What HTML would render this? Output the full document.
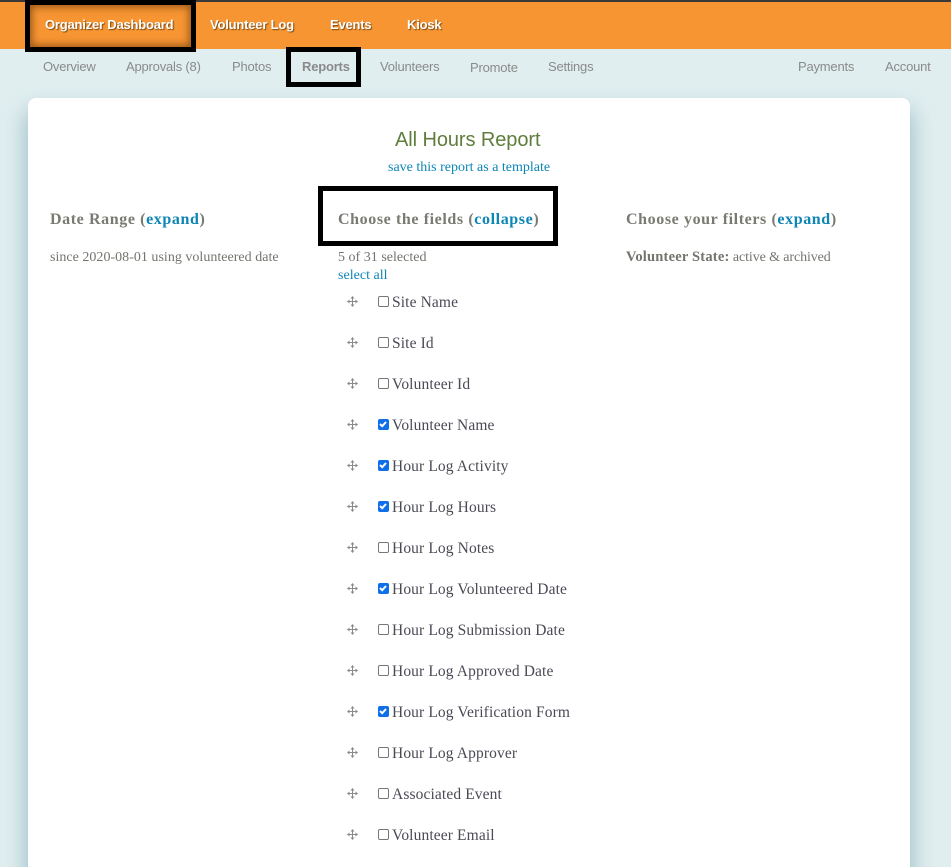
<!DOCTYPE html>
<html><head><meta charset="utf-8"><style>
html,body{margin:0;padding:0;background:#e0eeef;width:951px;height:867px;overflow:hidden}
body{position:relative}
.t{position:absolute;white-space:nowrap}
.top{position:absolute;left:0;top:0;width:951px;height:49px;background:#f79533;border-top:2px solid #3a3a3a;box-sizing:border-box}
.n{font:bold 13px "Liberation Sans",sans-serif;color:#fff;top:17px;letter-spacing:-.2px;text-shadow:1px 1px 1px #7a4a10}
.s{font:13px "Liberation Sans",sans-serif;color:#8a8a8a;top:59px;letter-spacing:-.2px}
.box{position:absolute;border:5px solid #000;box-sizing:border-box}
.card{position:absolute;left:28px;top:98px;width:882px;height:800px;background:#fff;border-radius:8px;box-shadow:0 14px 20px 3px rgba(120,165,180,.6)}
.h{font:bold 16px "Liberation Serif",serif;color:#7a7a72;letter-spacing:.6px;top:211px}
.h a,.a{color:#0e86b4}
.p{font:14px "Liberation Serif",serif;color:#74746e;letter-spacing:.02px}
.l{position:absolute;left:392px;font:15.5px "Liberation Serif",serif;color:#4a4a55;letter-spacing:.12px;white-space:nowrap}
.c{position:absolute;left:378px;width:11px;height:11px;box-sizing:border-box;border:1px solid #777;border-radius:2px;background:#fff}
.c.k{background:#0f6fe8;border-color:#0f6fe8}
.c.k svg{position:absolute;left:0;top:0}
.m{position:absolute;left:347px}
</style></head><body>
<div class="top"></div>
<div class="t n" style="left:45px">Organizer Dashboard</div>
<div class="t n" style="left:210px">Volunteer Log</div>
<div class="t n" style="left:330px">Events</div>
<div class="t n" style="left:407px">Kiosk</div>
<div class="box" style="left:25px;top:0;width:171px;height:52px;box-shadow:inset 0 0 8px 2px rgba(110,60,10,.7)"></div>
<div class="t s" style="left:43px">Overview</div>
<div class="t s" style="left:126px">Approvals (8)</div>
<div class="t s" style="left:232px">Photos</div>
<div class="t s" style="left:302px;font-weight:bold">Reports</div>
<div class="t s" style="left:380px">Volunteers</div>
<div class="t s" style="left:470px;top:60px">Promote</div>
<div class="t s" style="left:548px">Settings</div>
<div class="t s" style="left:798px">Payments</div>
<div class="t s" style="left:885px">Account</div>
<div class="box" style="left:286px;top:47px;width:75px;height:40px"></div>
<div class="card"></div>
<div class="t" style="left:395px;top:129px;font:20px 'Liberation Sans',sans-serif;color:#5f7d3c;letter-spacing:-.08px">All Hours Report</div>
<div class="t a" style="left:388px;top:160px;font:14px 'Liberation Serif',serif">save this report as a template</div>
<div class="t h" style="left:50px">Date Range (<a>expand</a>)</div>
<div class="t h" style="left:338px">Choose the fields (<a>collapse</a>)</div>
<div class="t h" style="left:626px">Choose your filters (<a>expand</a>)</div>
<div class="box" style="left:318px;top:186px;width:240px;height:60px"></div>
<div class="t p" style="left:50px;top:250px">since 2020-08-01 using volunteered date</div>
<div class="t p" style="left:338px;top:250px">5 of 31 selected</div>
<div class="t p a" style="left:338px;top:268px;color:#0e86b4">select all</div>
<div class="t p" style="left:626px;top:249px;letter-spacing:-.1px"><b style="font-size:14.5px;letter-spacing:.2px">Volunteer State:</b> active &amp; archived</div>
<svg width="0" height="0" style="position:absolute"><defs><g id="mv" fill="#8a8a8a"><rect x="5" y="1.5" width="1" height="9"/><rect x="1.5" y="5" width="9" height="1"/><path d="M5.5 0L3.5 2.5H7.5ZM5.5 11L3.5 8.5H7.5ZM0 5.5L2.5 3.5V7.5ZM11 5.5L8.5 3.5V7.5Z"/></g><path id="ck" d="M2 5l2.2 2.2L8 3" fill="none" stroke="#fff" stroke-width="2"/></defs></svg>
<svg class="m" style="top:296px" width="11" height="11"><use href="#mv"/></svg><div class="c" style="top:296px"></div><div class="l" style="top:294px">Site Name</div>
<svg class="m" style="top:337px" width="11" height="11"><use href="#mv"/></svg><div class="c" style="top:337px"></div><div class="l" style="top:335px">Site Id</div>
<svg class="m" style="top:378px" width="11" height="11"><use href="#mv"/></svg><div class="c" style="top:378px"></div><div class="l" style="top:376px">Volunteer Id</div>
<svg class="m" style="top:419px" width="11" height="11"><use href="#mv"/></svg><div class="c k" style="top:419px"><svg width="11" height="11" viewBox="0 0 11 11" style="left:-1px;top:-1px"><use href="#ck"/></svg></div><div class="l" style="top:417px">Volunteer Name</div>
<svg class="m" style="top:460px" width="11" height="11"><use href="#mv"/></svg><div class="c k" style="top:460px"><svg width="11" height="11" viewBox="0 0 11 11" style="left:-1px;top:-1px"><use href="#ck"/></svg></div><div class="l" style="top:458px">Hour Log Activity</div>
<svg class="m" style="top:501px" width="11" height="11"><use href="#mv"/></svg><div class="c k" style="top:501px"><svg width="11" height="11" viewBox="0 0 11 11" style="left:-1px;top:-1px"><use href="#ck"/></svg></div><div class="l" style="top:499px">Hour Log Hours</div>
<svg class="m" style="top:542px" width="11" height="11"><use href="#mv"/></svg><div class="c" style="top:542px"></div><div class="l" style="top:540px">Hour Log Notes</div>
<svg class="m" style="top:583px" width="11" height="11"><use href="#mv"/></svg><div class="c k" style="top:583px"><svg width="11" height="11" viewBox="0 0 11 11" style="left:-1px;top:-1px"><use href="#ck"/></svg></div><div class="l" style="top:581px">Hour Log Volunteered Date</div>
<svg class="m" style="top:624px" width="11" height="11"><use href="#mv"/></svg><div class="c" style="top:624px"></div><div class="l" style="top:622px">Hour Log Submission Date</div>
<svg class="m" style="top:665px" width="11" height="11"><use href="#mv"/></svg><div class="c" style="top:665px"></div><div class="l" style="top:663px">Hour Log Approved Date</div>
<svg class="m" style="top:706px" width="11" height="11"><use href="#mv"/></svg><div class="c k" style="top:706px"><svg width="11" height="11" viewBox="0 0 11 11" style="left:-1px;top:-1px"><use href="#ck"/></svg></div><div class="l" style="top:704px">Hour Log Verification Form</div>
<svg class="m" style="top:747px" width="11" height="11"><use href="#mv"/></svg><div class="c" style="top:747px"></div><div class="l" style="top:745px">Hour Log Approver</div>
<svg class="m" style="top:788px" width="11" height="11"><use href="#mv"/></svg><div class="c" style="top:788px"></div><div class="l" style="top:786px">Associated Event</div>
<svg class="m" style="top:829px" width="11" height="11"><use href="#mv"/></svg><div class="c" style="top:829px"></div><div class="l" style="top:827px">Volunteer Email</div>
</body></html>
